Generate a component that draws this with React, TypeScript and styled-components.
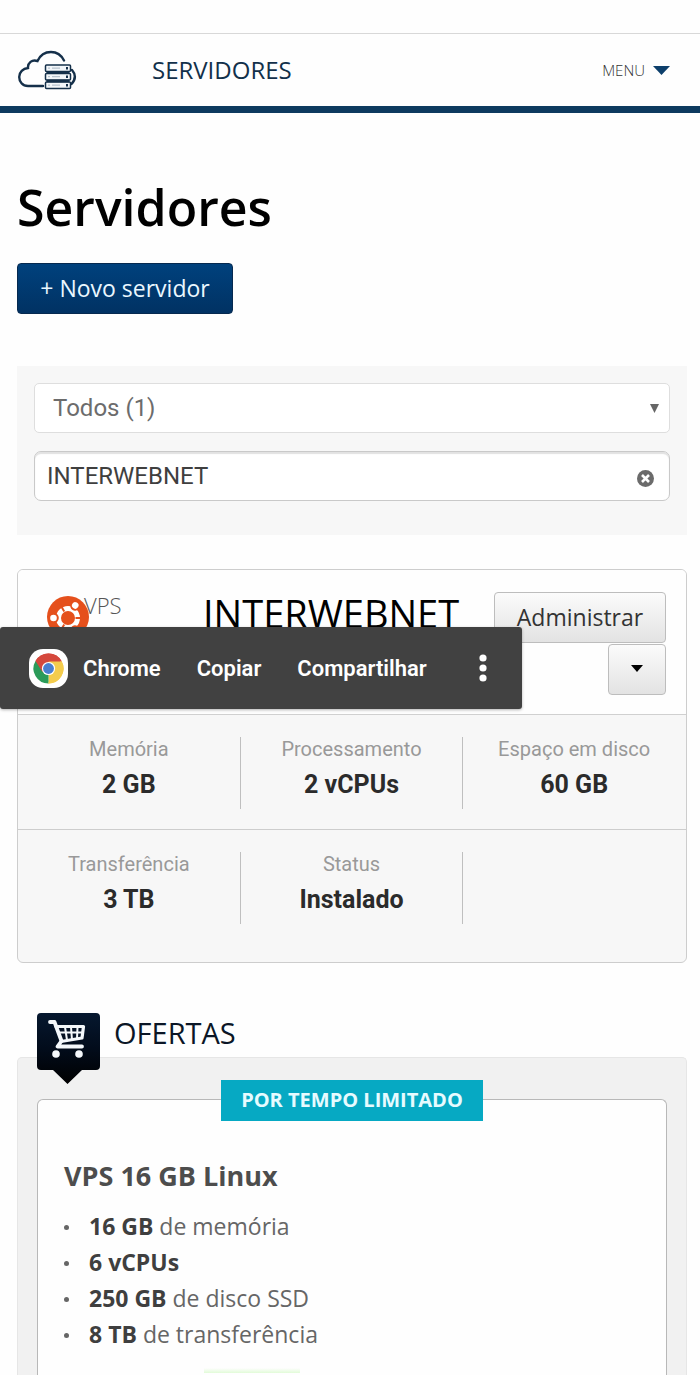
import React, { useState } from "react";
import styled, { createGlobalStyle } from "styled-components";

const humanist = `"Open Sans", "Noto Sans", sans-serif`;
const roboto = `Roboto, "Noto Sans", sans-serif`;

const GlobalStyle = createGlobalStyle`
  *, *::before, *::after { box-sizing: border-box; }
  body { margin: 0; background: #fefefe; color: #000; font-family: ${humanist}; }
  h1, h2, h3, dl, dd, ul { margin: 0; padding: 0; }
  button, input, select { font: inherit; color: inherit; margin: 0; }
`;

const Page = styled.div`
  display: flex;
  flex-direction: column;
  min-height: 100vh;
  padding-top: 33px;
`;

const TopBar = styled.header`
  display: flex;
  align-items: center;
  height: 80px;
  padding: 0 30px 0 18px;
  border-top: 1px solid #d8d8d8;
  border-bottom: 7px solid #0d3a5f;
`;

const Logo = styled.a`
  display: flex;
  width: 134px;
`;

const SectionLink = styled.a`
  font-size: 24px;
  line-height: 32px;
  color: #12304a;
  text-decoration: none;
`;

const MenuButton = styled.button`
  display: flex;
  align-items: center;
  gap: 8px;
  margin-left: auto;
  padding: 0;
  border: 0;
  background: none;
  && { font-size: 15px; font-weight: 300; color: #333; }
`;

const Main = styled.main`
  display: flex;
  flex-direction: column;
  flex: 1;
  padding: 62px 13px 0 17px;
`;

const Title = styled.h1`
  font-size: 50px;
  font-weight: 600;
  line-height: 64px;
`;

const NewServer = styled.button`
  align-self: flex-start;
  width: 216px;
  height: 51px;
  margin-top: 24px;
  padding: 0 0 2px;
  border: 1px solid #06294f;
  border-radius: 4px;
  background: linear-gradient(#00417d, #013263);
  && { font-size: 23px; color: #eaf7ff; }
`;

const Filters = styled.form`
  display: flex;
  flex-direction: column;
  gap: 18px;
  margin-top: 52px;
  padding: 17px 17px 34px;
  background: #f7f7f7;
  font-family: ${roboto};
`;

const Field = styled.div`
  position: relative;
  display: flex;
`;

const Select = styled.select`
  appearance: none;
  width: 100%;
  height: 50px;
  padding: 0 40px 0 18px;
  border: 1px solid #dedede;
  border-radius: 5px;
  background: #fff;
  && { font-size: 24px; color: #6c6c6c; }
`;

const Search = styled.input`
  width: 100%;
  height: 50px;
  padding: 0 50px 0 12px;
  border: 1px solid #c9c9c9;
  border-radius: 7px;
  background: #fff;
  box-shadow: inset 0 2px 1px #e2e2e2;
  && { font-size: 24px; color: #3f3f3f; }
`;

const SelectArrow = styled.svg`
  position: absolute;
  right: 11px;
  top: 21px;
  pointer-events: none;
`;

const ClearButton = styled.button`
  position: absolute;
  right: 16px;
  top: 19px;
  display: flex;
  padding: 0;
  border: 0;
  background: none;
`;

const ServerCard = styled.section`
  position: relative;
  margin-top: 34px;
  border: 1px solid #cdcdcd;
  border-radius: 6px;
  background: #f7f7f7;
`;

const ServerHead = styled.div`
  display: flex;
  align-items: flex-start;
  height: 145px;
  padding: 22px 20px 0 29px;
  border-bottom: 1px solid #d0d0d0;
  border-radius: 5px 5px 0 0;
  background: #fefefe;
`;

const System = styled.div`
  display: flex;
  width: 156px;
  padding-top: 4px;
`;

const Kind = styled.span`
  margin-left: -5px;
  font-size: 22px;
  font-weight: 300;
  line-height: 18px;
  color: #555;
`;

const ServerName = styled.h2`
  flex: 1;
  font-size: 38px;
  font-weight: 400;
  line-height: 42px;
`;

const Actions = styled.div`
  display: flex;
  flex-direction: column;
  align-items: flex-end;
  gap: 1px;
`;

const ActionButton = styled.button<{ $wide?: boolean }>`
  display: flex;
  align-items: center;
  justify-content: center;
  width: ${(p) => (p.$wide ? 172 : 58)}px;
  height: 51px;
  padding: 0 0 2px;
  border: 1px solid #bdbdbd;
  border-radius: 4px;
  background: linear-gradient(#fbfbfb, #e3e3e3);
  && { font-size: 23px; color: #333; }
`;

const Specs = styled.dl`
  display: grid;
  grid-template-columns: 1fr 1fr 1fr;
  padding-bottom: 18px;
  font-family: ${roboto};
`;

const Spec = styled.div<{ $divided: boolean; $ruled: boolean }>`
  padding: 22px 0 20px;
  border-bottom: ${(p) => (p.$ruled ? "1px solid #cdcdcd" : "0")};
  text-align: center;

  > div {
    height: 72px;
    border-right: 1px solid ${(p) => (p.$divided ? "#bfbfbf" : "transparent")};
  }
`;

const SpecLabel = styled.dt`
  font-size: 20px;
  line-height: 24px;
  color: #999;
`;

const SpecValue = styled.dd`
  margin-top: 8px;
  font-size: 25px;
  font-weight: 700;
  line-height: 32px;
  color: #2b2b2b;
`;

const SelectionMenu = styled.div`
  position: absolute;
  left: -18px;
  top: 57px;
  display: flex;
  align-items: center;
  width: 522px;
  height: 82px;
  padding-left: 28px;
  border-radius: 3px;
  background: #414141;
  box-shadow: 0 1px 3px rgba(0, 0, 0, 0.3);
`;

const SelectionItem = styled.button<{ $gap: number }>`
  display: flex;
  align-items: center;
  gap: 14px;
  margin-right: ${(p) => p.$gap}px;
  padding: 0;
  border: 0;
  background: none;
  && { font-family: ${roboto}; font-size: 22px; font-weight: 600; color: #fff; }
`;

const OffersHead = styled.div`
  position: relative;
  z-index: 1;
  display: flex;
  align-items: flex-start;
  gap: 14px;
  height: 44px;
  margin-top: 50px;
  padding-left: 20px;
`;

const OffersTitle = styled.h2`
  font-size: 29px;
  font-weight: 400;
  line-height: 40px;
  color: #0b1626;
`;

const OffersPanel = styled.section`
  display: flex;
  flex-direction: column;
  flex: 1;
  padding: 41px 19px 0;
  border: 1px solid #e6e6e6;
  border-bottom: 0;
  border-radius: 5px 5px 0 0;
  background: #f1f1f1;
`;

const Offer = styled.article`
  position: relative;
  flex: 1;
  padding: 57px 26px 0;
  border: 1px solid #b8b8b8;
  border-bottom: 0;
  border-radius: 6px 6px 0 0;
  background: #fefefe;
`;

const Ribbon = styled.strong`
  position: absolute;
  top: -20px;
  left: 50%;
  width: 262px;
  padding-bottom: 2px;
  transform: translateX(-50%);
  background: #06a9c3;
  color: #e6fbff;
  font-size: 20px;
  line-height: 39px;
  text-align: center;
  white-space: nowrap;
`;

const OfferTitle = styled.h3`
  font-size: 27px;
  font-weight: 700;
  line-height: 38px;
  color: #4d4d4d;
`;

const Features = styled.ul`
  margin-top: 13px;
  list-style: none;
`;

const Feature = styled.li`
  display: flex;
  align-items: center;
  font-size: 23px;
  line-height: 36px;
  color: #666;
  white-space: pre;

  &::before {
    content: "";
    width: 5px;
    height: 5px;
    margin: 2px 20px 0 0;
    border-radius: 50%;
    background: #666;
  }

  b { color: #3f3f3f; }
`;

const Highlight = styled.div`
  width: 96px;
  height: 5px;
  margin: 16px 0 0 140px;
  background: linear-gradient(#fefefe, #e2fbd8);
`;

const CloudServerIcon = () => (
  <svg width="60" height="42" viewBox="0 -1 60 42" fill="none" aria-hidden="true">
    <g stroke="#15304a" strokeWidth="2.4" strokeLinecap="round">
      <path d="M25 36H10C4.500 36 1.200 31.500 1.200 27C1.200 22 5 18.500 10 18C9.500 13 14 9 19.500 11C22 5.500 27 2 33 2C39 2 43.500 5.500 46 10.500" />
      <path d="M54 20C57.500 24 58 29 53.500 34" />
    </g>
    {[15, 23.5, 32].map((y) => (
      <g key={y}>
        <rect x="27.500" y={y} width="25" height="6.500" rx="1" fill="#f3f7fa" stroke="#15304a" strokeWidth="1.500" />
        <path d={`M30 ${y + 3.2}h2M34 ${y + 3.2}h8`} stroke="#b8c4ce" strokeWidth="1.200" />
        <rect x="48" y={y + 2} width="2" height="2.500" fill="#15304a" />
      </g>
    ))}
    <path d="M28.500 22.500h23M28.500 31h23" stroke="#15304a" strokeWidth="2.400" />
  </svg>
);

const UbuntuIcon = () => (
  <svg width="42" height="42" viewBox="0 0 42 42" aria-hidden="true">
    <circle cx="21" cy="21" r="21" fill="#e5501c" />
    <circle cx="21" cy="22" r="9.500" fill="none" stroke="#fff" strokeWidth="5" />
    {[0, 120, 240].map((a) => (
      <g key={a} transform={`rotate(${a} 21 22)`}>
        <path d="M13.500 22H5" stroke="#e5501c" strokeWidth="2" transform="rotate(60 21 22)" />
        <circle cx="7" cy="22" r="4.800" fill="#e5501c" />
        <circle cx="6.500" cy="22" r="3.300" fill="#fff" />
      </g>
    ))}
  </svg>
);

const ChromeIcon = () => (
  <svg width="41" height="41" viewBox="0 0 41 41" aria-hidden="true">
    <rect x="1" y="1" width="39" height="39" rx="14" fill="#fff" />
    <g transform="translate(20.500 20.500)">
      <path d="M0 0L-13 -7.500A15 15 0 0 1 13 -7.500Z" fill="#d5483c" />
      <path d="M0 0L13 -7.500A15 15 0 0 1 0 15Z" fill="#f4cc4d" />
      <path d="M0 0L0 15A15 15 0 0 1 -13 -7.500Z" fill="#2b9b59" />
      <path d="M0 -7H13.300A15 15 0 0 0 -13 -7.500L-6.100 3.500Z" fill="#d5483c" />
      <path d="M6.100 3.500L-.500 15A15 15 0 0 0 13.300 -7H0Z" fill="#f4cc4d" />
      <circle r="6.600" fill="#fff" />
      <circle r="5.400" fill="#4a7fd0" />
    </g>
  </svg>
);

const MoreIcon = () => (
  <svg width="8" height="28" viewBox="0 0 8 28" fill="#fff" aria-hidden="true">
    <circle cx="4" cy="4" r="3.600" />
    <circle cx="4" cy="14" r="3.600" />
    <circle cx="4" cy="24" r="3.600" />
  </svg>
);

const CartBadge = () => (
  <svg width="63" height="72" viewBox="0 0 63 72" aria-hidden="true">
    <defs>
      <linearGradient id="cart-bg" x1="0" y1="0" x2="0" y2="1">
        <stop offset="0" stopColor="#06182f" />
        <stop offset="0.500" stopColor="#020c1b" />
        <stop offset="1" stopColor="#000" />
      </linearGradient>
    </defs>
    <path d="M4 0H59Q63 0 63 4V53Q63 57 59 57H45L30.500 71L16 57H4Q0 57 0 53V4Q0 0 4 0Z" fill="url(#cart-bg)" />
    <g fill="none" stroke="#f4f8fb" strokeLinecap="round" strokeLinejoin="round">
      <path d="M13 9H17.500L24.500 28L20.500 33.500H45" strokeWidth="3.800" />
      <path d="M19 13.500H46.500L45 25L24 28.500" strokeWidth="3.200" />
      <path d="M22 19.500H45M28 14L30 27M34 14L35 27M40.500 14L40 26" strokeWidth="2" />
    </g>
    <circle cx="19" cy="41" r="3.800" fill="#f4f8fb" />
    <circle cx="42" cy="41" r="3.800" fill="#f4f8fb" />
  </svg>
);

const specs = [
  { label: "Memória", value: "2 GB" },
  { label: "Processamento", value: "2 vCPUs" },
  { label: "Espaço em disco", value: "60 GB" },
  { label: "Transferência", value: "3 TB" },
  { label: "Status", value: "Instalado" },
];

const features = [
  { amount: "16 GB", text: " de memória" },
  { amount: "6 vCPUs", text: "" },
  { amount: "250 GB", text: " de disco SSD" },
  { amount: "8 TB", text: " de transferência" },
];

export default function App() {
  const [query, setQuery] = useState("INTERWEBNET");

  return (
    <>
      <GlobalStyle />
      <Page>
        <TopBar>
          <Logo href="#" aria-label="Início">
            <CloudServerIcon />
          </Logo>
          <SectionLink href="#servidores">SERVIDORES</SectionLink>
          <MenuButton type="button">
            MENU
            <svg width="17" height="9" viewBox="0 0 17 9" aria-hidden="true">
              <path d="M0 0H17L8.500 9Z" fill="#0d3f6b" />
            </svg>
          </MenuButton>
        </TopBar>

        <Main>
          <Title>Servidores</Title>
          <NewServer type="button">+ Novo servidor</NewServer>

          <Filters onSubmit={(e: React.FormEvent) => e.preventDefault()}>
            <Field>
              <Select aria-label="Filtro">
                <option>Todos (1)</option>
              </Select>
              <SelectArrow width="9" height="9" viewBox="0 0 9 9" aria-hidden="true">
                <path d="M0 0H9L4.500 9Z" fill="#666" />
              </SelectArrow>
            </Field>
            <Field>
              <Search
                type="text"
                aria-label="Buscar servidor"
                value={query}
                onChange={(e) => setQuery(e.target.value)}
              />
              <ClearButton type="button" aria-label="Limpar busca" onClick={() => setQuery("")}>
                <svg width="17" height="17" viewBox="0 0 17 17" aria-hidden="true">
                  <circle cx="8.500" cy="8.500" r="8.500" fill="#6b6b6b" />
                  <path d="M5 5L12 12M12 5L5 12" stroke="#fff" strokeWidth="2.600" />
                </svg>
              </ClearButton>
            </Field>
          </Filters>

          <ServerCard>
            <ServerHead>
              <System>
                <UbuntuIcon />
                <Kind>VPS</Kind>
              </System>
              <ServerName>INTERWEBNET</ServerName>
              <Actions>
                <ActionButton type="button" $wide>
                  Administrar
                </ActionButton>
                <ActionButton type="button" aria-label="Mais ações">
                  <svg width="12" height="7" viewBox="0 0 12 7" aria-hidden="true">
                    <path d="M0 0H12L6 7Z" fill="#000" />
                  </svg>
                </ActionButton>
              </Actions>
            </ServerHead>
            <Specs>
              {specs.map((spec, i) => (
                <Spec key={spec.label} $divided={i % 3 < 2} $ruled={i < 3}>
                  <div>
                    <SpecLabel>{spec.label}</SpecLabel>
                    <SpecValue>{spec.value}</SpecValue>
                  </div>
                </Spec>
              ))}
            </Specs>
            <SelectionMenu role="toolbar" aria-label="Seleção de texto">
              <SelectionItem type="button" $gap={36}>
                <ChromeIcon />
                Chrome
              </SelectionItem>
              <SelectionItem type="button" $gap={36}>
                Copiar
              </SelectionItem>
              <SelectionItem type="button" $gap={52}>
                Compartilhar
              </SelectionItem>
              <SelectionItem type="button" $gap={0} aria-label="Mais opções">
                <MoreIcon />
              </SelectionItem>
            </SelectionMenu>
          </ServerCard>

          <OffersHead>
            <CartBadge />
            <OffersTitle>OFERTAS</OffersTitle>
          </OffersHead>
          <OffersPanel>
            <Offer>
              <Ribbon>POR TEMPO LIMITADO</Ribbon>
              <OfferTitle>VPS 16 GB Linux</OfferTitle>
              <Features>
                {features.map((f) => (
                  <Feature key={f.amount}>
                    <b>{f.amount}</b>
                    {f.text}
                  </Feature>
                ))}
              </Features>
              <Highlight />
            </Offer>
          </OffersPanel>
        </Main>
      </Page>
    </>
  );
}
